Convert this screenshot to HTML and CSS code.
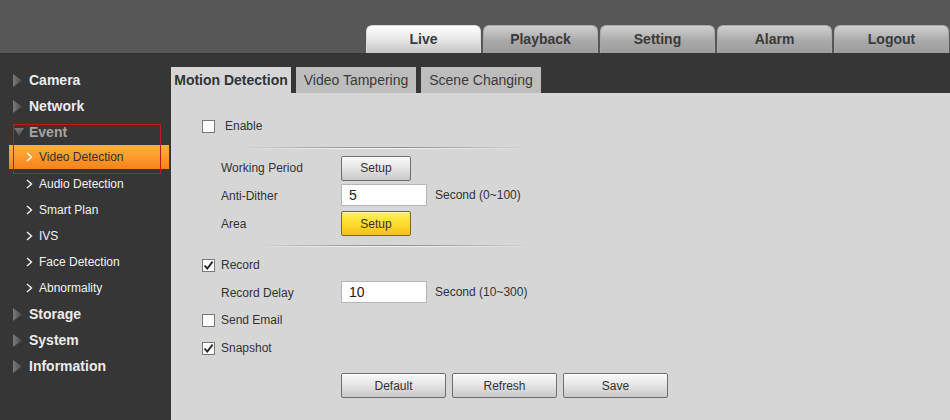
FILE: index.html
```html
<!DOCTYPE html>
<html lang="en">
<head>
<meta charset="utf-8">
<title>Event - Video Detection</title>
<link rel="stylesheet" href="styles.css">
</head>
<body>
<svg width="0" height="0" class="defs">
  <defs>
    <linearGradient id="triGrad" x1="0" y1="0" x2="1" y2="0">
      <stop offset="0" stop-color="#7a7a7a"/>
      <stop offset="1" stop-color="#4a4a4a"/>
    </linearGradient>
    <linearGradient id="triDown" x1="0" y1="0" x2="0" y2="1">
      <stop offset="0" stop-color="#7a7a7a"/>
      <stop offset="1" stop-color="#505050"/>
    </linearGradient>
  </defs>
</svg>

<header class="topbar">
  <nav class="main-tabs">
    <a class="main-tab active">Live</a>
    <a class="main-tab">Playback</a>
    <a class="main-tab">Setting</a>
    <a class="main-tab">Alarm</a>
    <a class="main-tab">Logout</a>
  </nav>
</header>

<div class="layout">
  <aside class="sidebar">
    <div class="menu-item"><svg class="tri" width="9" height="13" viewBox="0 0 9 13"><polygon points="0,0 9,6.5 0,13" fill="url(#triGrad)"/></svg><span>Camera</span></div>
    <div class="menu-item"><svg class="tri" width="9" height="13" viewBox="0 0 9 13"><polygon points="0,0 9,6.5 0,13" fill="url(#triGrad)"/></svg><span>Network</span></div>
    <div class="menu-item open"><svg class="tri down" width="10" height="8" viewBox="0 0 10 8"><polygon points="0,0 10,0 5,8" fill="url(#triDown)"/></svg><span>Event</span></div>
    <div class="sub-item selected"><svg class="chev" width="7" height="10" viewBox="0 0 7 10"><polyline points="1,1 5.5,5 1,9" fill="none" stroke="currentColor" stroke-width="1.4"/></svg><span>Video Detection</span></div>
    <div class="sub-item"><svg class="chev" width="7" height="10" viewBox="0 0 7 10"><polyline points="1,1 5.5,5 1,9" fill="none" stroke="currentColor" stroke-width="1.4"/></svg><span>Audio Detection</span></div>
    <div class="sub-item"><svg class="chev" width="7" height="10" viewBox="0 0 7 10"><polyline points="1,1 5.5,5 1,9" fill="none" stroke="currentColor" stroke-width="1.4"/></svg><span>Smart Plan</span></div>
    <div class="sub-item"><svg class="chev" width="7" height="10" viewBox="0 0 7 10"><polyline points="1,1 5.5,5 1,9" fill="none" stroke="currentColor" stroke-width="1.4"/></svg><span>IVS</span></div>
    <div class="sub-item"><svg class="chev" width="7" height="10" viewBox="0 0 7 10"><polyline points="1,1 5.5,5 1,9" fill="none" stroke="currentColor" stroke-width="1.4"/></svg><span>Face Detection</span></div>
    <div class="sub-item"><svg class="chev" width="7" height="10" viewBox="0 0 7 10"><polyline points="1,1 5.5,5 1,9" fill="none" stroke="currentColor" stroke-width="1.4"/></svg><span>Abnormality</span></div>
    <div class="menu-item"><svg class="tri" width="9" height="13" viewBox="0 0 9 13"><polygon points="0,0 9,6.5 0,13" fill="url(#triGrad)"/></svg><span>Storage</span></div>
    <div class="menu-item"><svg class="tri" width="9" height="13" viewBox="0 0 9 13"><polygon points="0,0 9,6.5 0,13" fill="url(#triGrad)"/></svg><span>System</span></div>
    <div class="menu-item"><svg class="tri" width="9" height="13" viewBox="0 0 9 13"><polygon points="0,0 9,6.5 0,13" fill="url(#triGrad)"/></svg><span>Information</span></div>
    <div class="highlight-box"></div>
  </aside>

  <main class="content">
    <div class="sub-tabs">
      <a class="sub-tab active">Motion Detection</a>
      <a class="sub-tab">Video Tampering</a>
      <a class="sub-tab">Scene Changing</a>
    </div>
    <section class="panel">
      <div class="check-row enable">
        <span class="checkbox"></span><span class="check-label">Enable</span>
      </div>
      <div class="divider first"></div>
      <div class="field-row wp">
        <span class="field-label">Working Period</span>
        <button class="btn small">Setup</button>
      </div>
      <div class="field-row ad">
        <span class="field-label">Anti-Dither</span>
        <span class="input">5</span>
        <span class="unit">Second (0~100)</span>
      </div>
      <div class="field-row area">
        <span class="field-label">Area</span>
        <button class="btn small yellow">Setup</button>
      </div>
      <div class="divider second"></div>
      <div class="check-row record">
        <span class="checkbox checked"><svg width="11" height="11" viewBox="0 0 11 11"><polyline points="1.5,5.5 4.3,8.6 9.6,1.6" fill="none" stroke="#222" stroke-width="1.8"/></svg></span><span class="check-label">Record</span>
      </div>
      <div class="field-row rd">
        <span class="field-label">Record Delay</span>
        <span class="input">10</span>
        <span class="unit">Second (10~300)</span>
      </div>
      <div class="check-row email">
        <span class="checkbox"></span><span class="check-label">Send Email</span>
      </div>
      <div class="check-row snap">
        <span class="checkbox checked"><svg width="11" height="11" viewBox="0 0 11 11"><polyline points="1.5,5.5 4.3,8.6 9.6,1.6" fill="none" stroke="#222" stroke-width="1.8"/></svg></span><span class="check-label">Snapshot</span>
      </div>
      <div class="actions">
        <button class="btn wide">Default</button>
        <button class="btn wide">Refresh</button>
        <button class="btn wide">Save</button>
      </div>
    </section>
  </main>
</div>
</body>
</html>
```

FILE: styles.css
```css
* { box-sizing: border-box; }

html, body {
  margin: 0;
  height: 100%;
}

body {
  background: #363636;
  font-family: "Liberation Sans", Arial, sans-serif;
  color: #333;
  overflow: hidden;
}

.defs { position: absolute; }

/* ---------- top bar ---------- */
.topbar {
  height: 53px;
  background: #575757;
  display: flex;
  align-items: flex-end;
  justify-content: flex-end;
  padding-right: 1px;
}

.main-tabs {
  display: flex;
  gap: 2px;
}

.main-tab {
  width: 115px;
  height: 28px;
  display: flex;
  align-items: center;
  justify-content: center;
  font-size: 14px;
  font-weight: bold;
  color: #3a3a3a;
  border-radius: 6px 6px 0 0;
  border: 1px solid #a8a8a8;
  border-bottom: none;
  background: linear-gradient(#cfcfcf, #a9a9a9 55%, #9c9c9c);
  padding-bottom: 1px;
}

.main-tab.active {
  background: linear-gradient(#ffffff, #e9e9e9 45%, #c4c4c4);
  border-color: #d8d8d8;
}

/* ---------- layout ---------- */
.layout {
  display: flex;
  height: calc(100% - 53px);
}

/* ---------- sidebar ---------- */
.sidebar {
  position: relative;
  width: 171px;
  flex: none;
  padding-top: 14px;
}

.menu-item {
  height: 26px;
  display: flex;
  align-items: center;
  padding-left: 13px;
  font-size: 14px;
  font-weight: bold;
  color: #ececec;
}

.menu-item .tri {
  margin-right: 7px;
  flex: none;
}

.menu-item.open {
  color: #a4a4a4;
}

.menu-item.open .tri {
  margin-left: 1px;
  margin-right: 5px;
}

.sub-item {
  height: 26px;
  display: flex;
  align-items: center;
  padding-left: 26px;
  font-size: 12px;
  color: #f2f2f2;
}

.sub-item .chev {
  margin-right: 6px;
  flex: none;
}

.sub-item.selected {
  margin-left: 9px;
  margin-right: 2px;
  padding-left: 17px;
  height: 24px;
  margin-bottom: 2px;
  color: #2e2e2e;
  background: linear-gradient(#ffb23e, #ff9a2c 50%, #f5821c);
}

.sub-item.selected .chev {
  color: #fff;
}

.highlight-box {
  position: absolute;
  left: 13px;
  top: 71px;
  width: 148px;
  height: 50px;
  border: 1.5px solid #c01a1a;
  pointer-events: none;
}

/* ---------- content ---------- */
.content {
  flex: 1;
  display: flex;
  flex-direction: column;
  padding-top: 14px;
}

.sub-tabs {
  display: flex;
  gap: 5px;
  height: 26px;
}

.sub-tab {
  width: 120px;
  display: flex;
  align-items: center;
  justify-content: center;
  font-size: 14px;
  color: #3a3a3a;
  background: #bdbdbd;
}

.sub-tab.active {
  background: #d6d6d6;
  font-weight: bold;
  color: #333;
}

.panel {
  flex: 1;
  background: #d6d6d6;
  padding: 19px 0 0 31px;
  font-size: 12px;
  color: #333;
}

/* rows */
.check-row {
  height: 28px;
  display: flex;
  align-items: center;
}

.checkbox {
  width: 13px;
  height: 13px;
  flex: none;
  background: #fff;
  border: 1px solid #777;
  display: flex;
  align-items: center;
  justify-content: center;
}

.check-label {
  margin-left: 6px;
}

.enable .check-label {
  margin-left: 10px;
}

.divider {
  height: 2px;
  background:
    linear-gradient(to right, rgba(140,140,140,0), #9a9a9a 35%, #8f8f8f 55%, rgba(140,140,140,0)) top / 100% 1px no-repeat,
    linear-gradient(to right, rgba(255,255,255,0), #f4f4f4 40%, #f0f0f0 60%, rgba(255,255,255,0)) bottom / 100% 1px no-repeat;
}

.divider.first {
  width: 292px;
  margin: 7px 0 6px 38px;
}

.divider.second {
  width: 280px;
  margin: 7px 0 7px 52px;
}

.field-row {
  display: flex;
  align-items: center;
  padding-left: 19px;
}

.field-label {
  width: 120px;
  flex: none;
}

.field-row.wp { height: 26px; }
.field-row.ad { height: 28px; }
.field-row.area { height: 29px; }
.field-row.rd { height: 31px; }

.check-row.record { height: 22px; }
.check-row.email { height: 26px; }
.check-row.snap { height: 30px; }

.field-row.ad .field-label { padding-top: 1px; }
.field-row.area .field-label { padding-top: 1px; }
.field-row.rd .field-label { padding-top: 2px; }

.input {
  width: 86px;
  height: 22px;
  background: #fff;
  border: 1px solid #b5b5b5;
  font-size: 14px;
  color: #222;
  padding-left: 7px;
  display: flex;
  align-items: center;
}

.unit {
  margin-left: 8px;
}

.btn {
  font-family: "Liberation Sans", Arial, sans-serif;
  font-size: 12px;
  color: #333;
  height: 25px;
  border: 1px solid #6e6e6e;
  border-radius: 2px;
  background: linear-gradient(#fafafa, #e6e6e6 45%, #c8c8c8);
  box-shadow: inset 0 1px 0 #fff;
  padding: 0;
  cursor: pointer;
}

.btn.small { width: 70px; }

.btn.yellow {
  border-color: #7c6a1c;
  background: linear-gradient(#fff25e, #ffdd2e 50%, #f6bf1a);
  box-shadow: inset 0 1px 0 #fff6a0;
}

.actions {
  display: flex;
  gap: 6px;
  padding-left: 139px;
  margin-top: 10px;
}

.btn.wide { width: 105px; }
```
